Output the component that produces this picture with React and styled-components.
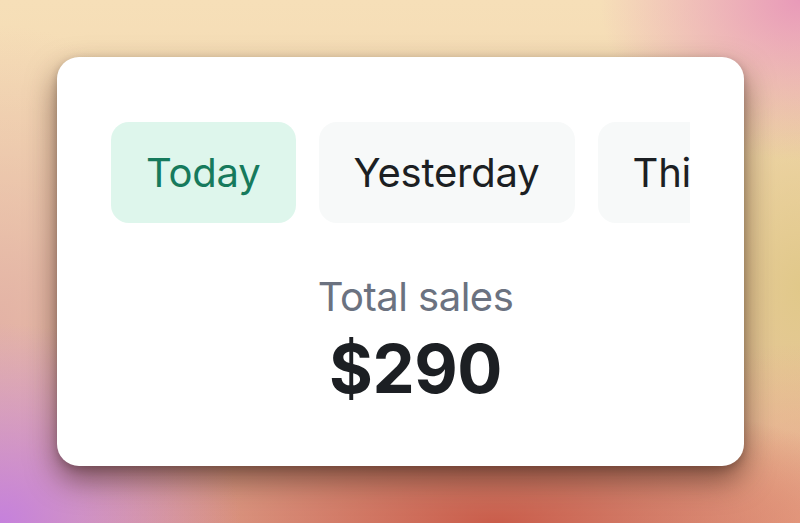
import React from "react";
import styled, { createGlobalStyle } from "styled-components";

const Global = createGlobalStyle`
  html, body { margin: 0; padding: 0; }
  body {
    width: 800px;
    height: 523px;
    overflow: hidden;
    font-family: Inter, "Noto Sans", "Liberation Sans", sans-serif;
  }
`;

const Backdrop = styled.div`
  width: 800px;
  height: 523px;
  box-sizing: border-box;
  padding: 57px 56px 57px 57px;
  background:
    radial-gradient(ellipse 240px 200px at 0% 100%, rgba(196, 126, 224, 0.95), rgba(196, 126, 224, 0) 100%),
    radial-gradient(ellipse 200px 160px at 100% 0%, rgba(232, 150, 185, 0.95), rgba(232, 150, 185, 0) 100%),
    radial-gradient(ellipse 420px 130px at 62% 100%, rgba(200, 88, 70, 0.95), rgba(200, 88, 70, 0) 100%),
    radial-gradient(ellipse 180px 180px at 100% 100%, rgba(236, 170, 140, 0.9), rgba(236, 170, 140, 0) 100%),
    radial-gradient(ellipse 150px 260px at 100% 55%, rgba(224, 200, 136, 0.95), rgba(224, 200, 136, 0) 100%),
    radial-gradient(ellipse 220px 300px at 0% 62%, rgba(226, 176, 165, 0.9), rgba(226, 176, 165, 0) 100%),
    linear-gradient(180deg, #f6dfb8 0%, #f3d7b0 45%, #e2b09a 100%);
`;

const Card = styled.div`
  height: 409px;
  box-sizing: border-box;
  background: #ffffff;
  border-radius: 22px;
  box-shadow: 0 14px 30px rgba(60, 28, 18, 0.6), 0 3px 8px rgba(0, 0, 0, 0.2);
  padding: 65px 54px 0 54px;
  display: flex;
  flex-direction: column;
`;

const TabStrip = styled.div`
  display: flex;
  gap: 23px;
  overflow: hidden;
  flex-shrink: 0;
`;

const Tab = styled.div`
  flex-shrink: 0;
  height: 101px;
  padding: 0 35px;
  box-sizing: border-box;
  display: flex;
  align-items: center;
  border-radius: 18px;
  font-size: 40px;
  font-weight: 400;
  letter-spacing: -0.2px;
  background: ${(p) => (p.$active ? "#def6ec" : "#f7f9f9")};
  color: ${(p) => (p.$active ? "#167a5c" : "#1c1f23")};
`;

const Summary = styled.div`
  display: flex;
  flex-direction: column;
  align-items: center;
  padding-left: 30px;
  margin-top: 50px;
`;

const Label = styled.div`
  font-size: 40px;
  line-height: 48px;
  color: #6b7280;
  letter-spacing: -0.5px;
`;

const Amount = styled.div`
  margin-top: 8px;
  font-size: 67px;
  line-height: 80px;
  font-weight: 700;
  color: #1c1f23;
  letter-spacing: -0.5px;
`;

export default function App() {
  return (
    <>
      <Global />
      <Backdrop>
        <Card>
          <TabStrip>
            <Tab $active>Today</Tab>
            <Tab>Yesterday</Tab>
            <Tab>This week</Tab>
          </TabStrip>
          <Summary>
            <Label>Total sales</Label>
            <Amount>$290</Amount>
          </Summary>
        </Card>
      </Backdrop>
    </>
  );
}
